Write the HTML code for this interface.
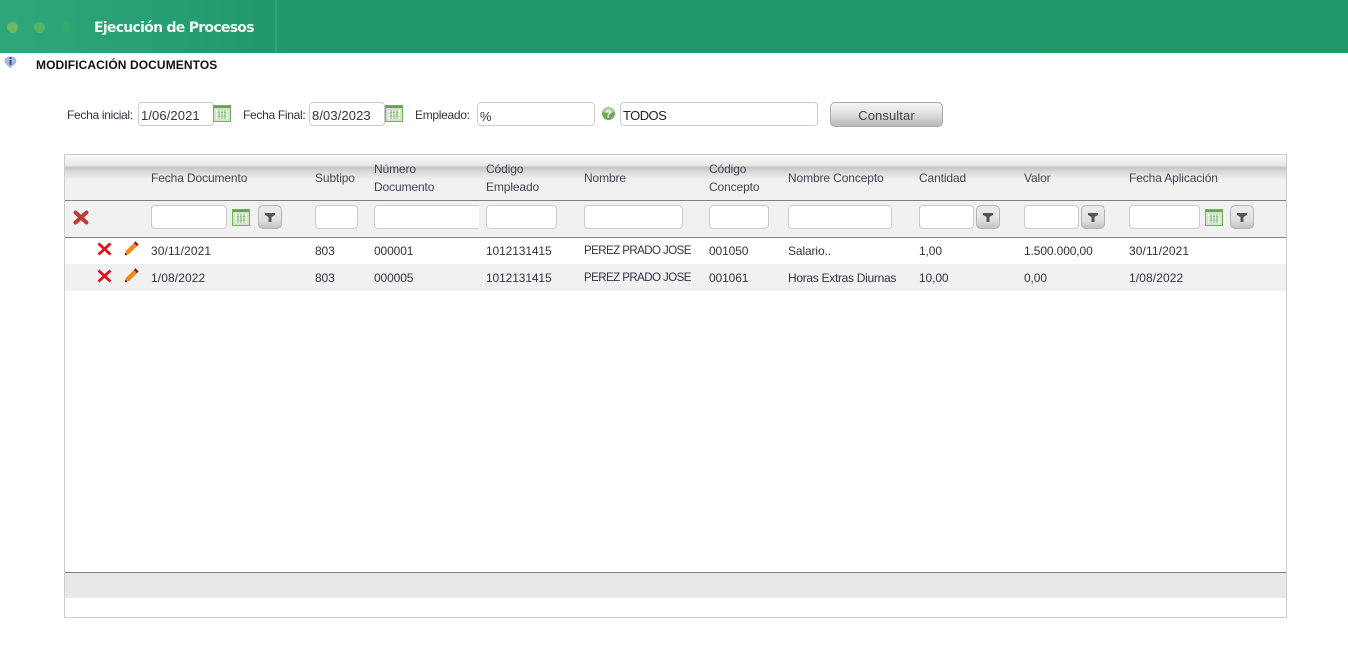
<!DOCTYPE html>
<html lang="es">
<head>
<meta charset="utf-8">
<title>Ejecución de Procesos</title>
<style>
html,body{margin:0;padding:0;background:#fff}
body{width:1348px;height:647px;position:relative;overflow:hidden;font-family:"Liberation Sans",sans-serif;font-size:12px;color:#333}
.a{position:absolute}
.t{position:absolute;white-space:nowrap;font-size:12px;line-height:14px;letter-spacing:-.12px;color:#33333f}
.h{color:#444450}
.c{font-size:11.500px;letter-spacing:-.55px}
.d{letter-spacing:.1px}
.l{letter-spacing:-.3px}
.i{position:absolute;box-sizing:border-box;background:#fff;border:1px solid #ccc;border-radius:4px;height:24px}
.f{position:absolute;box-sizing:border-box;background:#fff;border:1px solid #ccc;border-radius:4px;height:24px;top:205px}
.b{position:absolute;top:205px;width:24px;height:24px;box-sizing:border-box;border:1px solid #b4b4b4;border-radius:5px;background:linear-gradient(#ececec,#e0e0e0 65%,#c2c2c2)}
.b svg{position:absolute;left:5px;top:6px}
svg{position:absolute;display:block}
</style>
</head>
<body>
<div class="a" style="left:0;top:0;width:1348px;height:53px;background:linear-gradient(90deg,#2ea87b 0,#2aa275 100px,#209a6c 260px,#1f9a6b 100%)"></div>
<div class="a" style="left:275px;top:0;width:2px;height:53px;background:#35a67b"></div>
<div class="a" style="left:7px;top:22px;width:11px;height:11px;border-radius:50%;background:#6cb85a"></div>
<div class="a" style="left:34px;top:22px;width:11px;height:11px;border-radius:50%;background:#55b264"></div>
<div class="a" style="left:61px;top:22px;width:11px;height:11px;border-radius:50%;background:#35a66e"></div>
<div class="a" style="left:94px;top:19px;font:bold 14px/18px 'DejaVu Sans',sans-serif;letter-spacing:-.72px;color:#eef7f2;white-space:nowrap">Ejecución de Procesos</div>

<svg style="left:4px;top:56px" width="13" height="13" viewBox="0 0 13 13"><path d="M.5 5.500C1 8 4 9.500 6.500 12.500 9 9.500 12 8 12.500 5.500 12.500 2 10 .5 6.500 .5 3 .5 .5 2 .5 5.500Z" fill="#a9b9de"/><rect x="5.500" y="1" width="2" height="2" fill="#2d4f9e"/><rect x="5.500" y="4" width="2" height="5" fill="#2d4f9e"/></svg>
<div class="a" style="left:36px;top:58px;font:bold 12px/14px 'Liberation Sans',sans-serif;letter-spacing:.1px;color:#111;white-space:nowrap">MODIFICACIÓN DOCUMENTOS</div>

<div class="t l" style="left:67px;top:108px">Fecha inicial:</div>
<div class="i" style="left:138px;top:102px;width:76px"></div>
<div class="t" style="left:141px;top:109px;font-size:13px;letter-spacing:.1px">1/06/2021</div>
<svg style="left:213px;top:105px" width="19" height="17" viewBox="0 0 19 17"><use href="#cal"/></svg>
<div class="t l" style="left:243px;top:108px">Fecha Final:</div>
<div class="i" style="left:309px;top:102px;width:76px"></div>
<div class="t" style="left:312px;top:109px;font-size:13px;letter-spacing:.1px">8/03/2023</div>
<svg style="left:385px;top:105px" width="19" height="17" viewBox="0 0 19 17"><use href="#cal"/></svg>
<div class="t l" style="left:415px;top:108px">Empleado:</div>
<div class="i" style="left:477px;top:102px;width:118px"></div>
<div class="t" style="left:480px;top:110px;font-size:13px">%</div>
<svg style="left:601px;top:106px" width="15" height="15" viewBox="0 0 15 15"><circle cx="7.500" cy="7.500" r="6.500" fill="#6aa85c"/><path d="M2 6a5.500 5 0 0 1 11 0 8 4 0 0 1-11 0Z" fill="#a9cf9f"/><text x="7.500" y="11.500" font-family="Liberation Sans" font-size="11" font-weight="bold" text-anchor="middle" fill="#fff">?</text></svg>
<div class="i" style="left:620px;top:102px;width:198px"></div>
<div class="t" style="left:623px;top:109px;font-size:13px;letter-spacing:-.55px;color:#222">TODOS</div>
<div class="a" style="left:830px;top:102px;width:113px;height:25px;box-sizing:border-box;border:1px solid #aaa;border-radius:5px;background:linear-gradient(#f4f4f4,#e2e2e2 45%,#c6c6c6 80%,#b8b8b8);text-align:center;font-size:13px;line-height:25px;letter-spacing:.1px;color:#444">Consultar</div>

<!-- grid -->
<div class="a" style="left:64px;top:154px;width:1223px;height:464px;box-sizing:border-box;border:1px solid #ccc;background:#fff"></div>
<div class="a" style="left:65px;top:155px;width:1221px;height:45px;background:linear-gradient(#fbfbfb 0,#e6e6e6 11px,#c4c4c4 12px,#dedede 18px,#f1f1f1 25px,#f1f1f1 100%)"></div>
<div class="a" style="left:65px;top:200px;width:1221px;height:1px;background:#808080"></div>
<div class="a" style="left:65px;top:201px;width:1221px;height:36px;background:#f1f1f1"></div>
<div class="a" style="left:65px;top:237px;width:1221px;height:1px;background:#808080"></div>
<div class="a" style="left:65px;top:264px;width:1221px;height:27px;background:#f1f1f1"></div>
<div class="a" style="left:65px;top:572px;width:1221px;height:1px;background:#808080"></div>
<div class="a" style="left:65px;top:573px;width:1221px;height:25px;background:#e8e8e8"></div>

<div class="t h" style="left:151px;top:171px">Fecha Documento</div>
<div class="t h" style="left:315px;top:171px">Subtipo</div>
<div class="t h" style="left:374px;top:162px">Número</div>
<div class="t h" style="left:374px;top:180px">Documento</div>
<div class="t h" style="left:486px;top:162px">Código</div>
<div class="t h" style="left:486px;top:180px">Empleado</div>
<div class="t h" style="left:584px;top:171px">Nombre</div>
<div class="t h" style="left:709px;top:162px">Código</div>
<div class="t h" style="left:709px;top:180px">Concepto</div>
<div class="t h" style="left:788px;top:171px">Nombre Concepto</div>
<div class="t h" style="left:919px;top:171px">Cantidad</div>
<div class="t h" style="left:1024px;top:171px">Valor</div>
<div class="t h" style="left:1129px;top:171px">Fecha Aplicación</div>

<svg style="left:73px;top:210px" width="16" height="15" viewBox="0 0 16 15"><path d="M2.500 2.500 13.500 12.500M13.500 2.500 2.500 12.500" stroke="#c03a3a" stroke-width="4" stroke-linecap="round"/></svg>
<div class="f" style="left:151px;width:76px"></div>
<svg style="left:232px;top:209px" width="19" height="17" viewBox="0 0 19 17"><use href="#cal"/></svg>
<div class="b" style="left:258px"><svg width="12" height="11" viewBox="0 0 12 11"><path d="M1 1H11V3L7.500 5V10H4.500V5L1 3Z" fill="#555"/></svg></div>
<div class="f" style="left:315px;width:43px"></div>
<div class="f" style="left:374px;width:105px;border-right:0;border-radius:4px 0 0 4px"></div>
<div class="f" style="left:486px;width:71px"></div>
<div class="f" style="left:584px;width:99px"></div>
<div class="f" style="left:709px;width:60px"></div>
<div class="f" style="left:788px;width:104px"></div>
<div class="f" style="left:919px;width:55px"></div>
<div class="b" style="left:976px"><svg width="12" height="11" viewBox="0 0 12 11"><path d="M1 1H11V3L7.500 5V10H4.500V5L1 3Z" fill="#555"/></svg></div>
<div class="f" style="left:1024px;width:55px"></div>
<div class="b" style="left:1081px"><svg width="12" height="11" viewBox="0 0 12 11"><path d="M1 1H11V3L7.500 5V10H4.500V5L1 3Z" fill="#555"/></svg></div>
<div class="f" style="left:1129px;width:71px"></div>
<svg style="left:1205px;top:209px" width="19" height="17" viewBox="0 0 19 17"><use href="#cal"/></svg>
<div class="b" style="left:1230px"><svg width="12" height="11" viewBox="0 0 12 11"><path d="M1 1H11V3L7.500 5V10H4.500V5L1 3Z" fill="#555"/></svg></div>

<!-- row 1 -->
<svg style="left:97px;top:242px" width="15" height="14" viewBox="0 0 15 14"><path d="M1.500 1.500 13.500 12.500M13.500 1.500 1.500 12.500" stroke="#e2101c" stroke-width="2.800"/></svg>
<svg style="left:124px;top:241px" width="15" height="15" viewBox="0 0 15 15"><path d="M.8 14.200 2 9.800 9.800 2 13 5.200 5.200 13Z" fill="#f08a1e"/><path d="M9.800 2 11.500 .3 14.700 3.500 13 5.200Z" fill="#a5121e"/><path d="M.8 14.200 1.400 11.800 3.200 13.600Z" fill="#111"/></svg>
<div class="t d" style="left:151px;top:244px">30/11/2021</div>
<div class="t" style="left:315px;top:244px">803</div>
<div class="t" style="left:374px;top:244px">000001</div>
<div class="t" style="left:486px;top:244px">1012131415</div>
<div class="t c" style="left:584px;top:244px">PEREZ PRADO JOSE</div>
<div class="t" style="left:709px;top:244px">001050</div>
<div class="t" style="left:788px;top:244px">Salario..</div>
<div class="t" style="left:919px;top:244px">1,00</div>
<div class="t" style="left:1024px;top:244px">1.500.000,00</div>
<div class="t d" style="left:1129px;top:244px">30/11/2021</div>

<!-- row 2 -->
<svg style="left:97px;top:269px" width="15" height="14" viewBox="0 0 15 14"><path d="M1.500 1.500 13.500 12.500M13.500 1.500 1.500 12.500" stroke="#e2101c" stroke-width="2.800"/></svg>
<svg style="left:124px;top:268px" width="15" height="15" viewBox="0 0 15 15"><path d="M.8 14.200 2 9.800 9.800 2 13 5.200 5.200 13Z" fill="#f08a1e"/><path d="M9.800 2 11.500 .3 14.700 3.500 13 5.200Z" fill="#a5121e"/><path d="M.8 14.200 1.400 11.800 3.200 13.600Z" fill="#111"/></svg>
<div class="t d" style="left:151px;top:271px">1/08/2022</div>
<div class="t" style="left:315px;top:271px">803</div>
<div class="t" style="left:374px;top:271px">000005</div>
<div class="t" style="left:486px;top:271px">1012131415</div>
<div class="t c" style="left:584px;top:271px">PEREZ PRADO JOSE</div>
<div class="t" style="left:709px;top:271px">001061</div>
<div class="t" style="left:788px;top:271px;letter-spacing:-.3px">Horas Extras Diurnas</div>
<div class="t" style="left:919px;top:271px">10,00</div>
<div class="t" style="left:1024px;top:271px">0,00</div>
<div class="t d" style="left:1129px;top:271px">1/08/2022</div>

<svg width="0" height="0" style="left:0;top:0"><defs><g id="cal"><rect x=".5" y=".5" width="17" height="16" fill="#cfe6c4" stroke="#6fb25f"/><rect x="1" y="1" width="16" height="2" fill="#5fa552"/><path d="M3 5h12v2H3zM3 8.500h12v2H3zM3 12h12v2H3z" fill="#fff"/><path d="M5.500 5h1v9h-1zM8.500 5h1v9h-1zM11.500 5h1v9h-1z" fill="#5fa552"/></g></defs></svg>
</body>
</html>
